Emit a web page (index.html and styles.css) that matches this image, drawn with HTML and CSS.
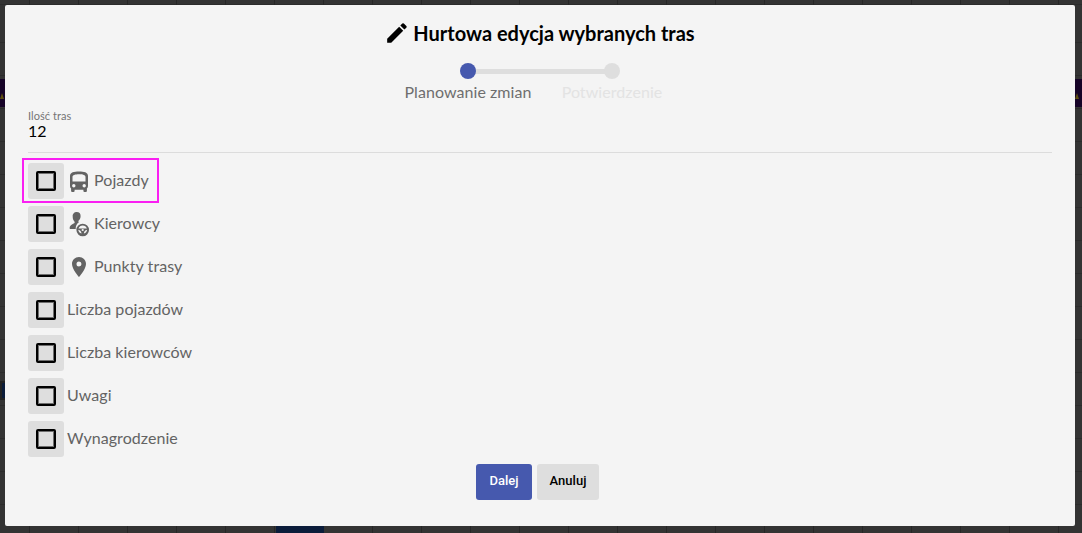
FILE: index.html
```html
<!DOCTYPE html>
<html lang="pl">
<head>
    <meta charset="UTF-8">
    <meta name="viewport" content="width=device-width, initial-scale=1.0">
    <title>Hurtowa edycja wybranych tras</title>
    <link rel="stylesheet" href="styles.css">
</head>
<body>
    <!-- Calendar cells peeking out behind the dialog -->
    <div class="peek peek-left"></div>
    <div class="peek peek-right"></div>
    <div class="peek peek-small"></div>
    <div class="peek peek-bottom"></div>

    <div class="modal">
        <h1 class="title">
            <svg class="title-icon" viewBox="1 0 24 24"><path d="M3 17.25V21h3.75L17.81 9.94l-3.75-3.75L3 17.25zM20.71 7.04a1 1 0 0 0 0-1.41l-2.34-2.34a1 1 0 0 0-1.41 0l-1.83 1.83 3.75 3.75 1.83-1.83z"/></svg>
            Hurtowa edycja wybranych tras
        </h1>

        <div class="stepper">
            <div class="step step-active">
                <span class="step-dot"></span>
                <span class="step-label">Planowanie zmian</span>
            </div>
            <div class="step">
                <span class="step-dot"></span>
                <span class="step-label">Potwierdzenie</span>
            </div>
        </div>

        <div class="summary">
            <div class="summary-label">Ilość tras</div>
            <div class="summary-value">12</div>
        </div>

        <div class="options">
            <label class="option option-marked">
                <span class="check"><span class="check-box"></span></span>
                <svg class="option-icon" viewBox="0 0 24 24"><path fill-rule="evenodd" d="M3 17c0 1 .4 1.900 1.100 2.500v2.400a1.100 1.100 0 0 0 1.100 1.100h1.300a1.100 1.100 0 0 0 1.100-1.100v-1.100h8.800v1.100a1.100 1.100 0 0 0 1.100 1.100h1.300a1.100 1.100 0 0 0 1.100-1.100v-2.400c.7-.6 1.100-1.500 1.100-2.500V7C21 3.200 17 2.500 12 2.500S3 3.200 3 7v10zm3.800 1.400a1.700 1.700 0 1 1 0-3.400 1.700 1.700 0 0 1 0 3.400zm10.400 0a1.700 1.700 0 1 1 0-3.400 1.700 1.700 0 0 1 0 3.400zM18.500 12.500h-13V8c0-2 2.500-2.800 6.500-2.800s6.500.8 6.500 2.800v4.500z"/></svg>
                <span class="option-text">Pojazdy</span>
            </label>
            <label class="option">
                <span class="check"><span class="check-box"></span></span>
                <svg class="option-icon" viewBox="0 0 24 24"><path d="M9.700 0a3.900 3.900 0 0 1 3.900 3.900c0 2-.8 3.500-1.900 4.600-.5.500-.3 1.300.2 1.800a7.800 7.800 0 0 0-3.200 6.800H3.500c-.7 0-.9-.5-.9-1 0-2 2-3.700 4.500-4.800.7-.3.8-1.200.3-1.800-1-1.200-1.700-2.700-1.700-4.700A3.900 3.900 0 0 1 9.700 0z"/><path fill-rule="evenodd" d="M15.700 11.700a6.300 6.300 0 1 1 0 12.600 6.300 6.300 0 0 1 0-12.600zm0 1.800a4.500 4.500 0 0 0-4.200 2.900h8.400a4.500 4.500 0 0 0-4.200-2.900zm0 3.400a1.100 1.100 0 1 0 0 2.200 1.100 1.100 0 0 0 0-2.200zm-4.400.9c.1 1.800 1.400 3.300 3.200 3.800 0-1.900-1.300-3.500-3.200-3.800zm8.800 0c-1.900.3-3.200 1.900-3.200 3.800 1.800-.5 3.100-2 3.200-3.800z"/></svg>
                <span class="option-text">Kierowcy</span>
            </label>
            <label class="option">
                <span class="check"><span class="check-box"></span></span>
                <svg class="option-icon" viewBox="0 0 24 24"><path d="M12 2C8.130 2 5 5.130 5 9c0 5.250 7 13 7 13s7-7.750 7-13c0-3.870-3.130-7-7-7zm0 9.500a2.500 2.500 0 1 1 0-5 2.500 2.500 0 0 1 0 5z"/></svg>
                <span class="option-text">Punkty trasy</span>
            </label>
            <label class="option">
                <span class="check"><span class="check-box"></span></span>
                <span class="option-text">Liczba pojazdów</span>
            </label>
            <label class="option">
                <span class="check"><span class="check-box"></span></span>
                <span class="option-text">Liczba kierowców</span>
            </label>
            <label class="option">
                <span class="check"><span class="check-box"></span></span>
                <span class="option-text">Uwagi</span>
            </label>
            <label class="option">
                <span class="check"><span class="check-box"></span></span>
                <span class="option-text">Wynagrodzenie</span>
            </label>
        </div>

        <div class="actions">
            <button class="btn btn-primary">Dalej</button>
            <button class="btn btn-cancel">Anuluj</button>
        </div>
    </div>
</body>
</html>
```

FILE: styles.css
```css
html, body {
    height: 100%;
}

body {
    margin: 0;
    padding: 5px 7px 7px 5px;
    box-sizing: border-box;
    overflow: hidden;
    font-family: Lato, 'Noto Sans', sans-serif;
    background-color: #333;
    background-image:
        repeating-linear-gradient(90deg, transparent 0, transparent 48px, #262626 48px, #262626 49px),
        repeating-linear-gradient(180deg, transparent 0, transparent 32px, #2b2b2b 32px, #2b2b2b 33px);
    background-position: -19px 0, 0 10px;
}

/* Cells behind the dialog */
.peek {
    position: absolute;
}

.peek-left {
    left: 0;
    top: 79px;
    width: 5px;
    height: 28px;
    background: #160327;
}

.peek-right {
    right: 0;
    top: 79px;
    width: 7px;
    height: 28px;
    background: #160327;
}

.peek-left::after,
.peek-right::after {
    content: "";
    position: absolute;
    left: 0;
    top: 14px;
    width: 4px;
    height: 6px;
    background: #5c4d10;
    clip-path: polygon(50% 0, 100% 100%, 0 100%);
}

.peek-small {
    left: 0;
    top: 381px;
    width: 3px;
    height: 15px;
    border: solid #222;
    border-width: 2px 0 2px 2px;
    background: #0b1c3a;
}

.peek-bottom {
    left: 276px;
    bottom: 0;
    width: 48px;
    height: 7px;
    background: #0b1c3a;
}

/* Dialog */
.modal {
    position: relative;
    height: 521px;
    box-sizing: border-box;
    padding: 0 23px;
    background: #f4f4f4;
    border-radius: 2px;
    letter-spacing: 0.06px;
}

.title {
    display: flex;
    justify-content: center;
    align-items: center;
    gap: 2px;
    height: 24px;
    margin: 0;
    padding-top: 16px;
    font-size: 20px;
    font-weight: 700;
    letter-spacing: 0;
    color: #000;
}

.title-icon {
    width: 26px;
    height: 26px;
}

/* Stepper */
.stepper {
    display: flex;
    justify-content: center;
    margin-top: 18px;
}

.step {
    position: relative;
    display: flex;
    flex-direction: column;
    align-items: center;
    width: 144px;
}

.step-dot {
    width: 16px;
    height: 16px;
    border-radius: 50%;
    background: #dedede;
}

.step-active .step-dot {
    position: relative;
    background: #4659ae;
}

.step-active::before {
    content: "";
    position: absolute;
    top: 6px;
    left: 72px;
    width: 144px;
    height: 5px;
    background: #dedede;
}

.step-label {
    margin-top: 3px;
    font-size: 16px;
    line-height: 20px;
    color: #e3e3e3;
    white-space: nowrap;
}

.step-active .step-label {
    color: #6e6e6e;
}

/* Summary */
.summary {
    margin-top: 7px;
    padding-bottom: 12px;
    border-bottom: 1px solid #dcdcdc;
}

.summary-label {
    font-size: 11px;
    line-height: 13px;
    color: #757575;
}

.summary-value {
    font-size: 16px;
    line-height: 18px;
    color: #000;
}

/* Options */
.options {
    display: flex;
    flex-direction: column;
    align-items: flex-start;
    gap: 7px;
    margin-top: 10px;
}

.option {
    position: relative;
    display: flex;
    align-items: center;
    height: 36px;
    font-size: 16px;
    color: #636363;
}

.option-text {
    padding-bottom: 3px;
}

.option-marked::after {
    content: "";
    position: absolute;
    top: -5px;
    left: -6px;
    right: -10px;
    bottom: -4px;
    border: 2px solid #fa1ff2;
}

.check {
    display: flex;
    justify-content: center;
    align-items: center;
    width: 36px;
    height: 36px;
    margin-right: 3px;
    border-radius: 3px;
    background: #dedede;
}

.check-box {
    width: 16px;
    height: 16px;
    border: 2px solid #000;
    border-radius: 2px;
    box-shadow: inset 0 0 0 1px rgba(0, 0, 0, 0.5);
}

.option-icon {
    width: 24px;
    height: 24px;
    margin-right: 3px;
    fill: #636363;
    overflow: visible;
}

/* Buttons */
.actions {
    display: flex;
    justify-content: center;
    gap: 5px;
    margin-top: 7px;
    padding-right: 5px;
}

.btn {
    width: 56px;
    height: 36px;
    padding: 0 0 3px;
    border: none;
    border-radius: 3px;
    background: #dedede;
    color: #000;
    font-family: Roboto, 'Liberation Sans', sans-serif;
    font-size: 13px;
    font-weight: 500;
}

.btn-primary {
    background: #4659ae;
    color: #fff;
}

.btn-cancel {
    width: 62px;
}
```
